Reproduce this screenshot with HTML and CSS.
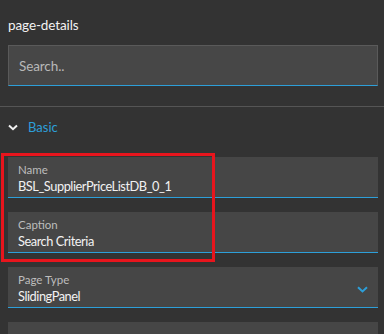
FILE: index.html
```html
<!DOCTYPE html>
<html lang="en">

<head>
    <meta charset="UTF-8">
    <meta name="viewport" content="width=device-width, initial-scale=1.0">
    <title>page-details</title>
    <link rel="stylesheet" href="styles.css">
</head>

<body>
    <header class="panel-head">
        <h3 class="panel-title">page-details</h3>
        <input class="search-box" type="text" placeholder="Search..">
    </header>

    <section class="group">
        <div class="group-toggle">
            <svg class="toggle-icon" width="10" height="7" viewBox="0 0 10 7">
                <path d="M1 1.5 L5 5.2 L9 1.5" fill="none" stroke="#f2f2f2" stroke-width="2"/>
            </svg>
            <span>Basic</span>
        </div>

        <div class="field-list">
            <div class="highlight"></div>

            <div class="field">
                <label class="field-label">Name</label>
                <div class="field-value">BSL_SupplierPriceListDB_0_1</div>
            </div>

            <div class="field">
                <label class="field-label">Caption</label>
                <div class="field-value">Search Criteria</div>
            </div>

            <div class="field field-select">
                <label class="field-label">Page Type</label>
                <div class="field-value">SlidingPanel</div>
                <svg class="select-icon" width="11" height="7" viewBox="0 0 11 7">
                    <path d="M1 1.2 L5.5 5.4 L10 1.2" fill="none" stroke="#2d9fd9" stroke-width="2"/>
                </svg>
            </div>

            <div class="field"></div>
        </div>
    </section>
</body>

</html>
```

FILE: styles.css
```css
html {
    box-sizing: border-box;
    font-family: "Source Sans Pro", Lato, "Noto Sans", sans-serif;
    font-size: 14px;
}

*,
*:before,
*:after {
    box-sizing: inherit;
}

body {
    margin: 0;
    background-color: #333333;
    color: #f2f2f2;
    overflow: hidden;
    height: 334px;
}

/******* Cabecera ********/
.panel-head {
    padding: 16px 6px 20px 8px;
    border-bottom: 1px solid #555555;
}

.panel-title {
    margin: 0 0 11px 0;
    font-size: 13.5px;
    font-weight: normal;
    line-height: 18px;
    letter-spacing: -0.1px;
}

.search-box {
    display: block;
    width: 100%;
    height: 41px;
    padding: 0 10px;
    background-color: #474747;
    border: 1px solid #5a5a5a;
    border-bottom: 1px solid #2d9fd9;
    color: #f2f2f2;
    font-family: inherit;
    font-size: 13.5px;
    letter-spacing: -0.1px;
    outline: none;
}

.search-box::placeholder {
    color: #b8b8b8;
}

/******* Grupo ********/
.group {
    padding: 11px 6px 0 8px;
}

.group-toggle {
    display: flex;
    align-items: center;
    gap: 10px;
    height: 18px;
    color: #2d9fd9;
    font-size: 13px;
}

.field-list {
    position: relative;
    display: flex;
    flex-direction: column;
    gap: 14px;
    margin-top: 21px;
}

.field {
    position: relative;
    flex-shrink: 0;
    height: 41px;
    padding: 5px 10px 0 10px;
    background-color: #464646;
    border-bottom: 1px solid #2d9fd9;
}

.field-label {
    display: block;
    color: #bdbdbd;
    font-size: 11.5px;
    line-height: 15px;
}

.field-value {
    font-size: 12.8px;
    line-height: 18px;
    letter-spacing: -0.45px;
}

.select-icon {
    position: absolute;
    right: 10px;
    top: 19px;
}

.highlight {
    position: absolute;
    left: -7px;
    top: -4px;
    width: 214px;
    height: 109px;
    border: 3px solid #e8151d;
    z-index: 2;
    pointer-events: none;
}
```
